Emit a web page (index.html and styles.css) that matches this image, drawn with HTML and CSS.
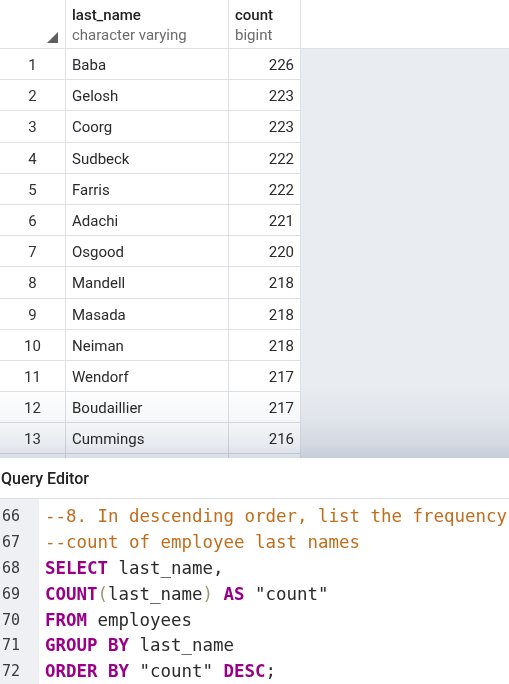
FILE: index.html
```html
<!DOCTYPE html>
<html>
<head>
<meta charset="utf-8">
<link rel="stylesheet" href="styles.css">
</head>
<body>
<div class="results">
  <div class="grid">
    <div class="hcell rownum"><span class="sort"></span></div>
    <div class="hcell"><div class="hname">last_name</div><div class="htype">character varying</div></div>
    <div class="hcell"><div class="hname">count</div><div class="htype">bigint</div></div>
    <div class="hfill"></div>

    <div class="cell num">1</div><div class="cell">Baba</div><div class="cell right">226</div><div class="fill"></div>
    <div class="cell num">2</div><div class="cell">Gelosh</div><div class="cell right">223</div><div class="fill"></div>
    <div class="cell num">3</div><div class="cell">Coorg</div><div class="cell right">223</div><div class="fill"></div>
    <div class="cell num">4</div><div class="cell">Sudbeck</div><div class="cell right">222</div><div class="fill"></div>
    <div class="cell num">5</div><div class="cell">Farris</div><div class="cell right">222</div><div class="fill"></div>
    <div class="cell num">6</div><div class="cell">Adachi</div><div class="cell right">221</div><div class="fill"></div>
    <div class="cell num">7</div><div class="cell">Osgood</div><div class="cell right">220</div><div class="fill"></div>
    <div class="cell num">8</div><div class="cell">Mandell</div><div class="cell right">218</div><div class="fill"></div>
    <div class="cell num">9</div><div class="cell">Masada</div><div class="cell right">218</div><div class="fill"></div>
    <div class="cell num">10</div><div class="cell">Neiman</div><div class="cell right">218</div><div class="fill"></div>
    <div class="cell num">11</div><div class="cell">Wendorf</div><div class="cell right">217</div><div class="fill"></div>
    <div class="cell num">12</div><div class="cell">Boudaillier</div><div class="cell right">217</div><div class="fill"></div>
    <div class="cell num">13</div><div class="cell">Cummings</div><div class="cell right">216</div><div class="fill"></div>
    <div class="cell num"></div><div class="cell"></div><div class="cell right"></div><div class="fill"></div>
  </div>
  <div class="fade"></div>
</div>

<div class="qe-title">Query Editor</div>

<div class="editor">
  <div class="line"><span class="ln">66</span><span class="code"><span class="cm">--8. In descending order, list the frequency</span></span></div>
  <div class="line"><span class="ln">67</span><span class="code"><span class="cm">--count of employee last names</span></span></div>
  <div class="line"><span class="ln">68</span><span class="code"><span class="kw">SELECT</span> last_name,</span></div>
  <div class="line"><span class="ln">69</span><span class="code"><span class="kw">COUNT</span><span class="br">(</span>last_name<span class="br">)</span> <span class="kw">AS</span> "count"</span></div>
  <div class="line"><span class="ln">70</span><span class="code"><span class="kw">FROM</span> employees</span></div>
  <div class="line"><span class="ln">71</span><span class="code"><span class="kw">GROUP</span> <span class="kw">BY</span> last_name</span></div>
  <div class="line"><span class="ln">72</span><span class="code"><span class="kw">ORDER</span> <span class="kw">BY</span> "count" <span class="kw">DESC</span>;</span></div>
</div>
</body>
</html>
```

FILE: styles.css
```css
html, body {
  margin: 0;
  padding: 0;
  background: #ffffff;
  width: 509px;
  height: 684px;
  overflow: hidden;
}

body {
  font-family: Roboto, "Liberation Sans", sans-serif;
  color: #222222;
}

.results {
  position: relative;
  height: 458px;
  overflow: hidden;
  background: #e9ecf1;
}

.grid {
  display: grid;
  grid-template-columns: 66px 163px 72px 1fr;
  grid-auto-rows: 31.2px;
  grid-template-rows: 49px;
}

.hcell {
  position: relative;
  background: #ffffff;
  border-right: 1px solid #dde0e6;
  border-bottom: 1px solid #dde0e6;
  box-sizing: border-box;
  padding: 5px 0 0 6px;
}

.hfill {
  background: #ffffff;
  border-bottom: 1px solid #dde0e6;
}

.hname {
  font-size: 15px;
  font-weight: 500;
  color: #222222;
  line-height: 20px;
}

.htype {
  font-size: 15px;
  color: #6b6b6b;
  line-height: 20px;
}

.sort {
  position: absolute;
  right: 7px;
  bottom: 5px;
  width: 0;
  height: 0;
  border-left: 11px solid transparent;
  border-bottom: 11px solid #5f5f5f;
}

.cell {
  background: #ffffff;
  border-right: 1px solid #dde0e6;
  border-bottom: 1px solid #dde0e6;
  box-sizing: border-box;
  font-size: 15px;
  color: #2a2a2a;
  display: flex;
  align-items: center;
  padding: 2px 6px 0 6px;
}

.cell.num {
  justify-content: center;
  color: #333333;
}

.cell.right {
  justify-content: flex-end;
}

.fill {
  background: #e9ecf1;
}

.fade {
  position: absolute;
  left: 0;
  right: 0;
  bottom: 0;
  height: 72px;
  pointer-events: none;
  mix-blend-mode: multiply;
  background: linear-gradient(to bottom, rgb(255, 255, 255) 0%, rgb(246, 247, 249) 45%, rgb(232, 235, 240) 80%, rgb(218, 222, 230) 100%);
}

.qe-title {
  height: 41px;
  box-sizing: border-box;
  border-bottom: 1px solid #dde0e6;
  font-size: 16px;
  font-weight: 500;
  color: #222222;
  padding: 11px 0 0 1px;
  line-height: 20px;
}

.editor {
  padding-top: 4px;
  background: linear-gradient(to right, #eef0f4 0, #eef0f4 39px, #ffffff 39px);
}

.line {
  display: flex;
  height: 25.9px;
  align-items: center;
  white-space: pre;
}

.ln {
  width: 39px;
  box-sizing: border-box;
  padding-left: 2px;
  font-family: "DejaVu Sans Mono", monospace;
  font-size: 15px;
  color: #3a3a3a;
}

.code {
  padding-left: 6px;
  font-family: "DejaVu Sans Mono", "Liberation Mono", monospace;
  font-size: 17.45px;
  color: #2a2a2a;
}

.cm {
  color: #c06d1c;
}

.kw {
  color: #990088;
  font-weight: bold;
}

.br {
  color: #999977;
}
```
